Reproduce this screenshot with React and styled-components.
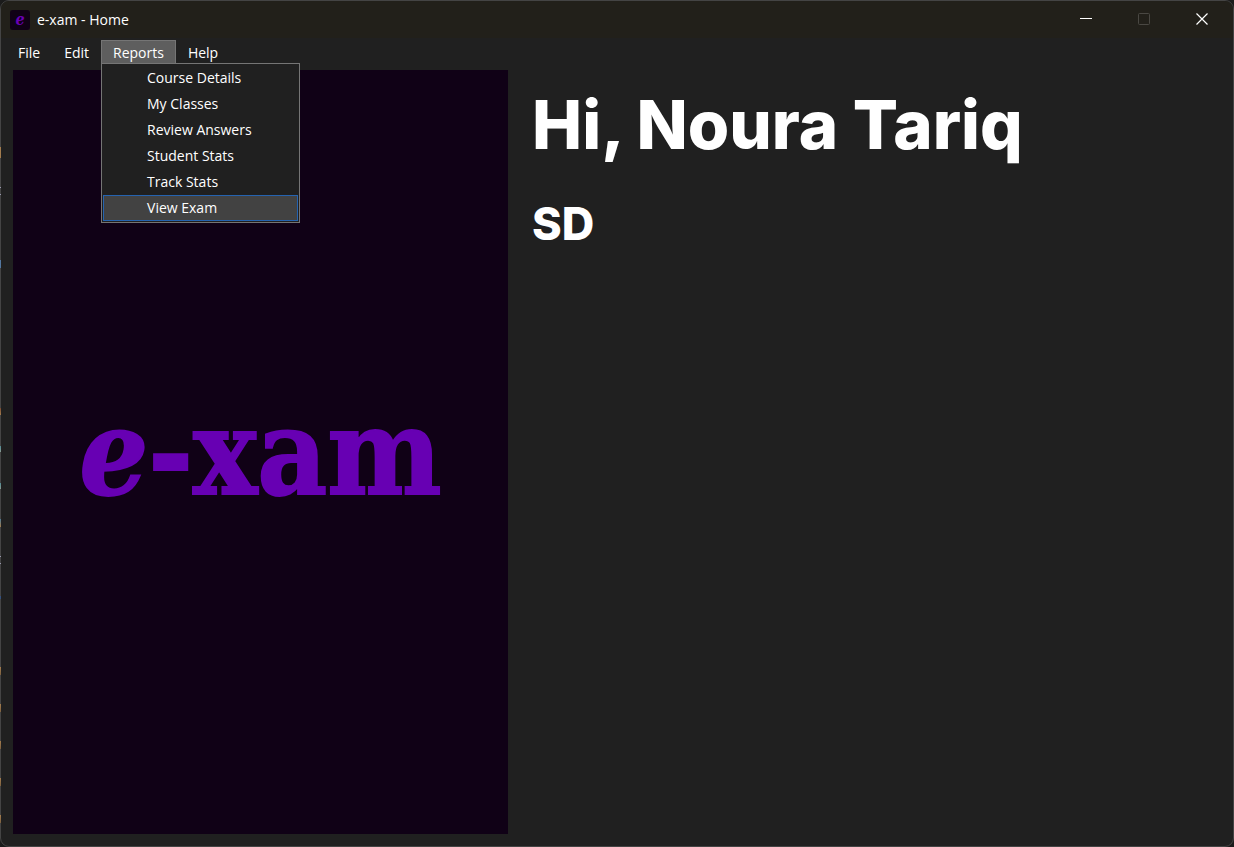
import React from "react";
import styled, { createGlobalStyle } from "styled-components";

const GlobalStyle = createGlobalStyle`
  * { box-sizing: border-box; }
  body { margin: 0; background: #1b1b1b; }
  button { font: inherit; color: inherit; border: 0; padding: 0; background: none; }
`;

const Window = styled.div`
  position: relative;
  display: flex;
  flex-direction: column;
  min-height: 100vh;
  border: 1px solid #444444;
  border-radius: 9px;
  background: #202020;
  color: #ffffff;
  font: 14px/20px "Open Sans", "Noto Sans", sans-serif;
`;

/* slivers of the editor behind the window, seen along its left edge */
const EdgeGlints = styled.div`
  position: absolute;
  top: 0;
  bottom: 0;
  left: -1px;
  width: 1px;
  background:
    linear-gradient(#a27c4e, #a27c4e) 0 146px / 1px 11px no-repeat,
    linear-gradient(#9a9ab0, #9a9ab0) 0 186px / 1px 1px no-repeat,
    linear-gradient(#9a9ab0, #9a9ab0) 0 193px / 1px 1px no-repeat,
    linear-gradient(#5377a0, #5377a0) 0 259px / 1px 8px no-repeat,
    linear-gradient(#7a4a30, #a27c4e) 0 407px / 1px 7px no-repeat,
    linear-gradient(#4f8a94, #8a9a90) 0 445px / 1px 6px no-repeat,
    linear-gradient(#4f8a94, #8a9a90) 0 482px / 1px 6px no-repeat,
    linear-gradient(#4f7a94, #a27c4e) 0 518px / 1px 8px no-repeat,
    linear-gradient(#9a9ab0, #9a9ab0) 0 555px / 1px 1px no-repeat,
    linear-gradient(#9a9ab0, #9a9ab0) 0 562px / 1px 1px no-repeat,
    linear-gradient(#35507c, #35507c) 0 595px / 1px 3px no-repeat,
    linear-gradient(#a27c4e, #7c603f) 0 666px / 1px 8px no-repeat,
    linear-gradient(#a27c4e, #7c603f) 0 703px / 1px 8px no-repeat,
    linear-gradient(#a27c4e, #7c603f) 0 740px / 1px 8px no-repeat,
    linear-gradient(#a27c4e, #7c603f) 0 777px / 1px 8px no-repeat,
    linear-gradient(#a27c4e, #7c603f) 0 814px / 1px 8px no-repeat;
`;

const TitleBar = styled.header`
  display: flex;
  align-items: center;
  height: 37px;
  padding-left: 9px;
  border-radius: 8px 8px 0 0;
  background: #22201a;
`;

const AppIcon = styled.span`
  display: flex;
  align-items: center;
  justify-content: center;
  width: 20px;
  height: 20px;
  border-radius: 3px;
  background: #100116;
  color: #6a00b5;
  font: italic bold 16px/16px "DejaVu Serif Condensed", "DejaVu Serif", serif;
`;

const Title = styled.span`
  flex: 1;
  padding-left: 7px;
`;

const Controls = styled.div`
  display: flex;
  height: 100%;
  padding: 0 2px 2px 0;
`;

const ControlButton = styled.button`
  display: flex;
  align-items: center;
  justify-content: center;
  width: 58px;
  color: ${(p) => (p.disabled ? "#4a4843" : "#ffffff")};
`;

const MenuBar = styled.nav`
  display: flex;
  padding: 2px 0 0 5px;
`;

const MenuGroup = styled.div`
  position: relative;
`;

const MenuButton = styled.button`
  display: block;
  height: 24px;
  padding: 0 11px;
  border: solid ${(p) => (p.$open ? "#757575" : "transparent")};
  border-width: 1px 1px 0;
  background: ${(p) => (p.$open ? "#5e5e5e" : "transparent")};
`;

const Dropdown = styled.div`
  position: absolute;
  top: 100%;
  left: 0;
  z-index: 1;
  width: 199px;
  margin-top: -1px;
  padding: 1px;
  border: 1px solid #757575;
  background: #202020;
`;

const DropdownItem = styled.button`
  display: block;
  width: 100%;
  height: 26px;
  padding-left: 43px;
  border: 1px solid ${(p) => (p.$active ? "#2563b0" : "transparent")};
  background: ${(p) => (p.$active ? "#424242" : "transparent")};
  text-align: left;
`;

const Content = styled.main`
  flex: 1;
  display: grid;
  grid-template-columns: 5fr 7fr;
  gap: 20px;
  padding: 6px 12px 12px;
`;

const BrandPanel = styled.section`
  display: flex;
  align-items: center;
  justify-content: center;
  background: #100116;
`;

const Wordmark = styled.div`
  color: #6700b3;
  -webkit-text-stroke: 2px #6700b3;
  font: bold 120px/140px "DejaVu Serif Condensed", "DejaVu Serif", serif;
`;

const Greeting = styled.section`
  padding: 11px 0 0 4px;
  font-family: Inter, "Open Sans", sans-serif;
  font-weight: 800;
`;

const Name = styled.h1`
  margin: 0;
  font-size: 67px;
  line-height: 88px;
  font-weight: inherit;
`;

const Role = styled.h2`
  margin: 25px 0 0;
  font-size: 45px;
  line-height: 60px;
  font-weight: inherit;
`;

const reports = ["Course Details", "My Classes", "Review Answers", "Student Stats", "Track Stats", "View Exam"];

export default function App() {
  return (
    <>
      <GlobalStyle />
      <Window>
        <EdgeGlints />
        <TitleBar>
          <AppIcon aria-hidden="true">e</AppIcon>
          <Title>e-xam - Home</Title>
          <Controls>
            <ControlButton aria-label="Minimize">
              <svg width="12" height="12" stroke="currentColor"><path d="M0 5.5h12" /></svg>
            </ControlButton>
            <ControlButton aria-label="Maximize" disabled>
              <svg width="12" height="12" fill="none" stroke="currentColor"><rect x=".5" y=".5" width="11" height="11" rx="1" /></svg>
            </ControlButton>
            <ControlButton aria-label="Close">
              <svg width="12" height="12" stroke="currentColor" strokeWidth="1.2"><path d="M.5 .5l11 11M11.5 .5l-11 11" /></svg>
            </ControlButton>
          </Controls>
        </TitleBar>
        <MenuBar>
          <MenuButton>File</MenuButton>
          <MenuButton>Edit</MenuButton>
          <MenuGroup>
            <MenuButton $open aria-expanded="true">Reports</MenuButton>
            <Dropdown>
              {reports.map((label) => (
                <DropdownItem key={label} $active={label === "View Exam"}>{label}</DropdownItem>
              ))}
            </Dropdown>
          </MenuGroup>
          <MenuButton>Help</MenuButton>
        </MenuBar>
        <Content>
          <BrandPanel>
            <Wordmark><i>e</i>-xam</Wordmark>
          </BrandPanel>
          <Greeting>
            <Name>Hi, Noura Tariq</Name>
            <Role>SD</Role>
          </Greeting>
        </Content>
      </Window>
    </>
  );
}
